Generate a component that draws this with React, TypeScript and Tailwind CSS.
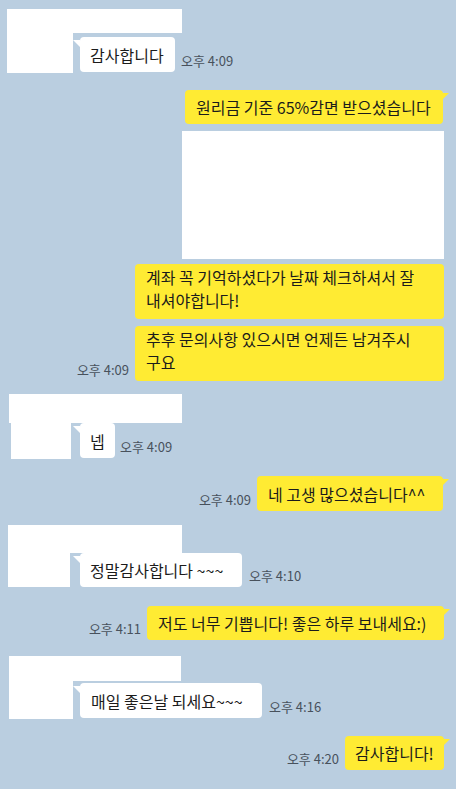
import React from "react";

const font = { fontFamily: '"Noto Sans CJK KR", "Noto Sans", sans-serif' };

function LeftTail() {
  return (
    <svg className="absolute -left-[7px] top-[3px]" width="7" height="7" viewBox="0 0 7 7">
      <polygon points="0,0 7,0 7,7" fill="#ffffff" />
    </svg>
  );
}

function RightTail() {
  return (
    <svg className="absolute -right-[6px] top-[3px]" width="6" height="6" viewBox="0 0 6 6">
      <polygon points="0,0 6,0 0,6" fill="#ffeb33" />
    </svg>
  );
}

function Time({ children }: { children: string }) {
  return <span className="text-[13px] leading-[15px] text-[#48515c] whitespace-nowrap">{children}</span>;
}

export default function App() {
  return (
    <div
      className="w-[456px] h-[789px] bg-[#bacee0] flex flex-col overflow-hidden text-[16px] text-[#1b1b1b]"
      style={font}
    >
      {/* 상대방 1 */}
      <div className="mt-[9px] ml-[7px] w-[175px] h-[24px] bg-white" />
      <div className="flex items-start">
        <div className="ml-[7px] w-[66px] h-[40px] bg-white" />
        <div className="ml-[7px] mt-[4px] flex items-end gap-[6px]">
          <div className="relative w-[95px] h-[35px] bg-white rounded-[4px] pl-[10px] flex items-center whitespace-nowrap leading-[20px]">
            <LeftTail />
            감사합니다
          </div>
          <div className="mb-[1px]"><Time>오후 4:09</Time></div>
        </div>
      </div>

      {/* 나 */}
      <div className="mt-[17px] self-end mr-[13px] relative w-[258px] h-[34px] bg-[#ffeb33] rounded-[4px] pl-[11px] flex items-center whitespace-nowrap leading-[20px]">
        <RightTail />
        원리금 기준 65%감면 받으셨습니다
      </div>
      <div className="mt-[7px] self-end mr-[12px] w-[262px] h-[128px] bg-white" />
      <div className="mt-[5px] self-end mr-[12px] w-[309px] h-[55px] bg-[#ffeb33] rounded-[4px] pl-[11px] pt-[2px] leading-[23px] whitespace-nowrap">
        계좌 꼭 기억하셨다가 날짜 체크하셔서 잘<br />내셔야합니다!
      </div>
      <div className="mt-[7px] self-end mr-[12px] flex items-end gap-[6px]">
        <div className="mb-[1px]"><Time>오후 4:09</Time></div>
        <div className="w-[309px] h-[55px] bg-[#ffeb33] rounded-[4px] pl-[11px] pt-[2px] leading-[23px] whitespace-nowrap">
          추후 문의사항 있으시면 언제든 남겨주시<br />구요
        </div>
      </div>

      {/* 상대방 2 */}
      <div className="mt-[13px] ml-[9px] w-[173px] h-[29px] bg-white" />
      <div className="flex items-start">
        <div className="ml-[11px] w-[60px] h-[36px] bg-white" />
        <div className="ml-[9px] flex items-end gap-[5px]">
          <div className="relative w-[35px] h-[35px] bg-white rounded-[4px] pl-[10px] flex items-center whitespace-nowrap leading-[20px]">
            <LeftTail />
            넵
          </div>
          <div className="mb-[1px]"><Time>오후 4:09</Time></div>
        </div>
      </div>

      {/* 나 */}
      <div className="mt-[17px] self-end mr-[13px] flex items-end gap-[6px]">
        <div className="mb-[1px]"><Time>오후 4:09</Time></div>
        <div className="relative w-[186px] h-[35px] bg-[#ffeb33] rounded-[4px] pl-[11px] flex items-center whitespace-nowrap leading-[20px]">
          <RightTail />
          네 고생 많으셨습니다^^
        </div>
      </div>

      {/* 상대방 3 */}
      <div className="mt-[14px] ml-[8px] w-[174px] h-[28px] bg-white" />
      <div className="flex items-start">
        <div className="ml-[8px] w-[62px] h-[34px] bg-white" />
        <div className="ml-[10px] flex items-end gap-[7px]">
          <div className="relative w-[162px] h-[34px] bg-white rounded-[4px] pl-[10px] flex items-center whitespace-nowrap leading-[20px]">
            <LeftTail />
            정말감사합니다 ~~~
          </div>
          <div className="mb-[1px]"><Time>오후 4:10</Time></div>
        </div>
      </div>

      {/* 나 */}
      <div className="mt-[19px] self-end mr-[12px] flex items-end gap-[6px]">
        <div className="mb-[1px]"><Time>오후 4:11</Time></div>
        <div className="relative w-[297px] h-[34px] bg-[#ffeb33] rounded-[4px] pl-[11px] flex items-center whitespace-nowrap leading-[20px]">
          <RightTail />
          저도 너무 기쁩니다! 좋은 하루 보내세요:)
        </div>
      </div>

      {/* 상대방 4 */}
      <div className="mt-[16px] ml-[9px] w-[172px] h-[25px] bg-white" />
      <div className="flex items-start">
        <div className="ml-[9px] w-[64px] h-[38px] bg-white" />
        <div className="ml-[7px] mt-[2px] flex items-end gap-[7px]">
          <div className="relative w-[182px] h-[35px] bg-white rounded-[4px] pl-[11px] flex items-center whitespace-nowrap leading-[20px]">
            <LeftTail />
            매일 좋은날 되세요~~~
          </div>
          <div className="mb-[1px]"><Time>오후 4:16</Time></div>
        </div>
      </div>

      {/* 나 */}
      <div className="mt-[17px] self-end mr-[12px] flex items-end gap-[6px]">
        <div className="mb-[1px]"><Time>오후 4:20</Time></div>
        <div className="relative w-[99px] h-[34px] bg-[#ffeb33] rounded-[4px] pl-[10px] flex items-center whitespace-nowrap leading-[20px]">
          <RightTail />
          감사합니다!
        </div>
      </div>
    </div>
  );
}
